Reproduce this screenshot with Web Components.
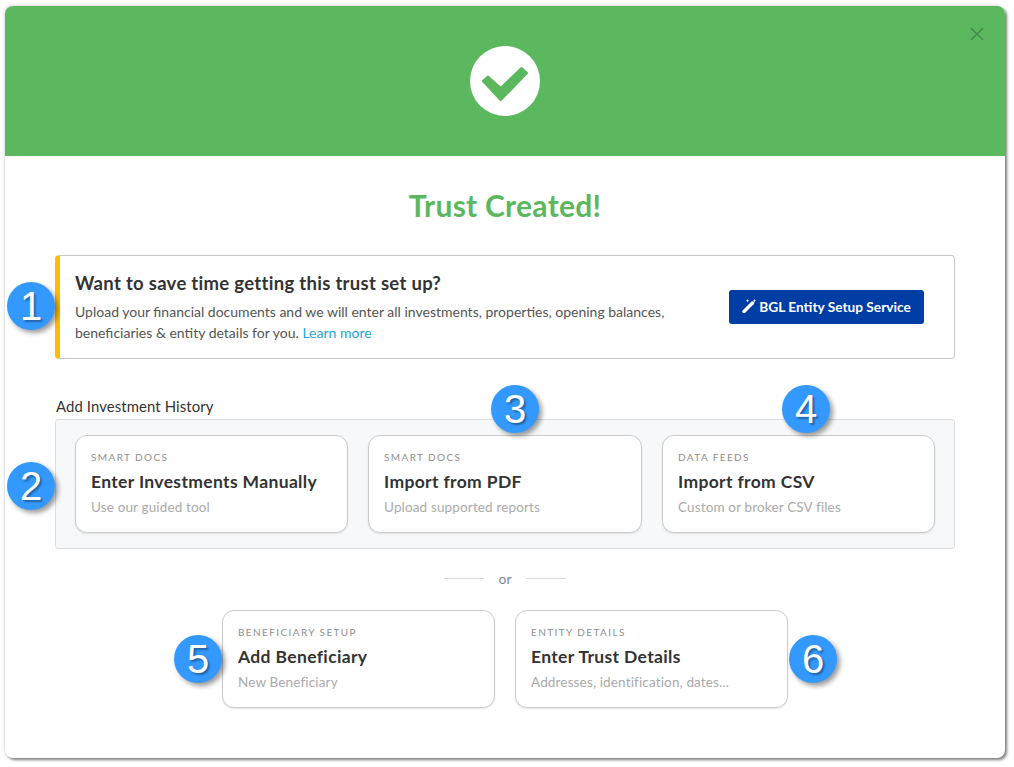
<!DOCTYPE html>
<html>
<head>
<meta charset="utf-8">
<title>Trust Created</title>
<style>
  html, body { margin: 0; background: #fff; }
  body { display: flow-root; height: 767px; overflow: hidden; font-family: Lato, "Open Sans", sans-serif; color: #333; }
</style>
</head>
<body>
<trust-modal>
  <setup-banner heading="Want to save time getting this trust set up?" action="BGL Entity Setup Service">
    Upload your financial documents and we will enter all investments, properties, opening balances,<br>beneficiaries &amp; entity details for you. <a href="#">Learn more</a>
  </setup-banner>
  <card-panel label="Add Investment History">
    <option-card kicker="SMART DOCS" heading="Enter Investments Manually" note="Use our guided tool"></option-card>
    <option-card kicker="SMART DOCS" heading="Import from PDF" note="Upload supported reports"></option-card>
    <option-card kicker="DATA FEEDS" heading="Import from CSV" note="Custom or broker CSV files"></option-card>
  </card-panel>
  <or-divider></or-divider>
  <card-row>
    <option-card kicker="BENEFICIARY SETUP" heading="Add Beneficiary" note="New Beneficiary"></option-card>
    <option-card kicker="ENTITY DETAILS" heading="Enter Trust Details" note="Addresses, identification, dates..."></option-card>
  </card-row>
</trust-modal>
<num-badge x="7" y="282">1</num-badge>
<num-badge x="7" y="462">2</num-badge>
<num-badge x="491" y="385">3</num-badge>
<num-badge x="782" y="385">4</num-badge>
<num-badge x="174" y="635">5</num-badge>
<num-badge x="789" y="635">6</num-badge>

<script>
class TrustModal extends HTMLElement {
  constructor() {
    super();
    this.attachShadow({ mode: 'open' });
    this.shadowRoot.innerHTML = `
      <style>
        :host {
          display: block;
          width: 1000px;
          height: 752px;
          margin: 6px 0 0 5px;
          background: #fff;
          border-radius: 8px;
          box-shadow: 2px 2px 3px rgba(0,0,0,.5), -1px -1px 3px rgba(0,0,0,.12);
          overflow: hidden;
        }
        header {
          height: 150px;
          background: #5cb85f;
          display: flex;
          align-items: center;
          justify-content: center;
          position: relative;
        }
        .close { position: absolute; top: 21px; right: 21px; width: 14px; height: 14px; }
        .tick { display: block; }
        h1 {
          margin: 31px 0 32px;
          height: 36px;
          text-align: center;
          font: 700 30px/36px Lato, sans-serif;
          letter-spacing: .25px;
          color: #5cb85f;
        }
        main { padding: 0 50px; }
      </style>
      <header>
        <svg class="tick" width="70" height="70" viewBox="0 0 70 70">
          <circle cx="35" cy="35" r="35" fill="#fff"/>
          <polygon points="18,31 30.7,42.5 51.5,22.5 56.5,27 30.7,53.5 13.5,35" fill="#5cb85f" stroke="#5cb85f" stroke-width="3" stroke-linejoin="round"/>
        </svg>
        <svg class="close" viewBox="0 0 14 14"><path d="M1 1 13 13M13 1 1 13" stroke="#448c4a" stroke-width="1.6" fill="none"/></svg>
      </header>
      <h1>Trust Created!</h1>
      <main><slot></slot></main>
    `;
  }
}

class SetupBanner extends HTMLElement {
  constructor() {
    super();
    this.attachShadow({ mode: 'open' });
    this.shadowRoot.innerHTML = `
      <style>
        :host {
          display: flex;
          align-items: center;
          box-sizing: border-box;
          height: 104px;
          border: 1px solid #c8c8c8;
          border-left: 5px solid #ffbc05;
          border-radius: 4px;
          padding: 0 30px 0 15px;
          justify-content: space-between;
        }
        .text { width: 610px; }
        h2 { margin: 0 0 6px; font: 700 18.5px/24px Lato, sans-serif; color: #333; letter-spacing: .3px; }
        p { margin: 0; font: 400 14px/21px Lato, sans-serif; color: #555; }
        ::slotted(a) { color: #1fa3dc; text-decoration: none; }
        button {
          display: flex;
          align-items: center;
          gap: 3px;
          box-sizing: border-box;
          height: 34px;
          width: 195px;
          justify-content: center;
          padding: 0 0 2px;
          border: 0;
          border-radius: 3px;
          background: #003da5;
          color: #fff;
          font: 700 13.7px Lato, sans-serif;
        }
      </style>
      <div class="text">
        <h2></h2>
        <p><slot></slot></p>
      </div>
      <button>
        <svg width="14" height="14" viewBox="0 0 14 14"><path d="M2 12.5 10.5 4" stroke="#fff" stroke-width="3.4" stroke-linecap="round" fill="none"/><path d="M12.5 0l.5 1.3 1 .4-1 .5-.5 1.2-.5-1.2-1-.5 1-.4zM5.5 0l.5 1.3 1.3.5-1.3.5-.5 1.2-.5-1.2-1.3-.5 1.3-.5z" fill="#fff"/></svg>
        <span></span>
      </button>
    `;
    this.shadowRoot.querySelector('h2').textContent = this.getAttribute('heading');
    this.shadowRoot.querySelector('span').textContent = this.getAttribute('action');
  }
}

class CardPanel extends HTMLElement {
  constructor() {
    super();
    this.attachShadow({ mode: 'open' });
    this.shadowRoot.innerHTML = `
      <style>
        :host { display: block; margin-top: 38px; }
        h3 { margin: 0 0 4px 1px; font: 400 14.9px/18px Lato, sans-serif; color: #333; letter-spacing: .1px; }
        .box {
          box-sizing: border-box;
          height: 130px;
          display: grid;
          grid-template-columns: 273px 274px 273px;
          gap: 20px;
          padding: 15px 19px;
          background: #f7f8fa;
          border: 1px solid #dedede;
          border-radius: 3px;
        }
      </style>
      <h3></h3>
      <div class="box"><slot></slot></div>
    `;
    this.shadowRoot.querySelector('h3').textContent = this.getAttribute('label');
  }
}

class OptionCard extends HTMLElement {
  constructor() {
    super();
    this.attachShadow({ mode: 'open' });
    this.shadowRoot.innerHTML = `
      <style>
        :host {
          display: block;
          box-sizing: border-box;
          height: 98px;
          padding: 14px 15px 0;
          background: #fff;
          border: 1px solid #ccc;
          border-radius: 12px;
          box-shadow: 0 1px 2px rgba(0,0,0,.1);
        }
        .kicker { font: 400 10px/14px Lato, sans-serif; letter-spacing: 1.4px; color: #8f8f8f; }
        .heading { margin-top: 6px; font: 700 17.5px/24px Lato, sans-serif; color: #333; letter-spacing: .35px; }
        .note { margin-top: 4px; font: 400 13.5px/18px Lato, sans-serif; color: #aaa; letter-spacing: .15px; }
      </style>
      <div class="kicker"></div>
      <div class="heading"></div>
      <div class="note"></div>
    `;
    for (const name of ['kicker', 'heading', 'note']) {
      this.shadowRoot.querySelector('.' + name).textContent = this.getAttribute(name);
    }
  }
}

class OrDivider extends HTMLElement {
  constructor() {
    super();
    this.attachShadow({ mode: 'open' });
    this.shadowRoot.innerHTML = `
      <style>
        :host {
          display: flex;
          box-sizing: border-box;
          align-items: center;
          justify-content: center;
          gap: 14px;
          height: 61px;
          padding-bottom: 2px;
          font: 400 14px Lato, sans-serif;
          color: #7f8c9a;
        }
        i { display: block; width: 40px; height: 1px; background: #d8d8d8; }
      </style>
      <i></i><span>or</span><i></i>
    `;
  }
}

class CardRow extends HTMLElement {
  constructor() {
    super();
    this.attachShadow({ mode: 'open' });
    this.shadowRoot.innerHTML = `
      <style>
        :host { display: flex; justify-content: center; gap: 20px; }
        ::slotted(option-card) { width: 273px; }
      </style>
      <slot></slot>
    `;
  }
}

// numbered callouts drawn over the finished screen
class NumBadge extends HTMLElement {
  constructor() {
    super();
    this.attachShadow({ mode: 'open' });
    this.shadowRoot.innerHTML = `
      <style>
        :host {
          position: absolute;
          width: 48px;
          height: 48px;
          display: flex;
          align-items: center;
          justify-content: center;
          border-radius: 50%;
          background: #3399ff;
          color: #fff;
          font: 400 40px/48px "Liberation Sans", sans-serif;
          text-shadow: 2px 2px 2px rgba(0,0,0,.35);
          box-shadow: 3px 3px 5px rgba(0,0,0,.4);
        }
      </style>
      <slot></slot>
    `;
    this.style.left = this.getAttribute('x') + 'px';
    this.style.top = this.getAttribute('y') + 'px';
  }
}

customElements.define('trust-modal', TrustModal);
customElements.define('setup-banner', SetupBanner);
customElements.define('card-panel', CardPanel);
customElements.define('option-card', OptionCard);
customElements.define('or-divider', OrDivider);
customElements.define('card-row', CardRow);
customElements.define('num-badge', NumBadge);
</script>
</body>
</html>
